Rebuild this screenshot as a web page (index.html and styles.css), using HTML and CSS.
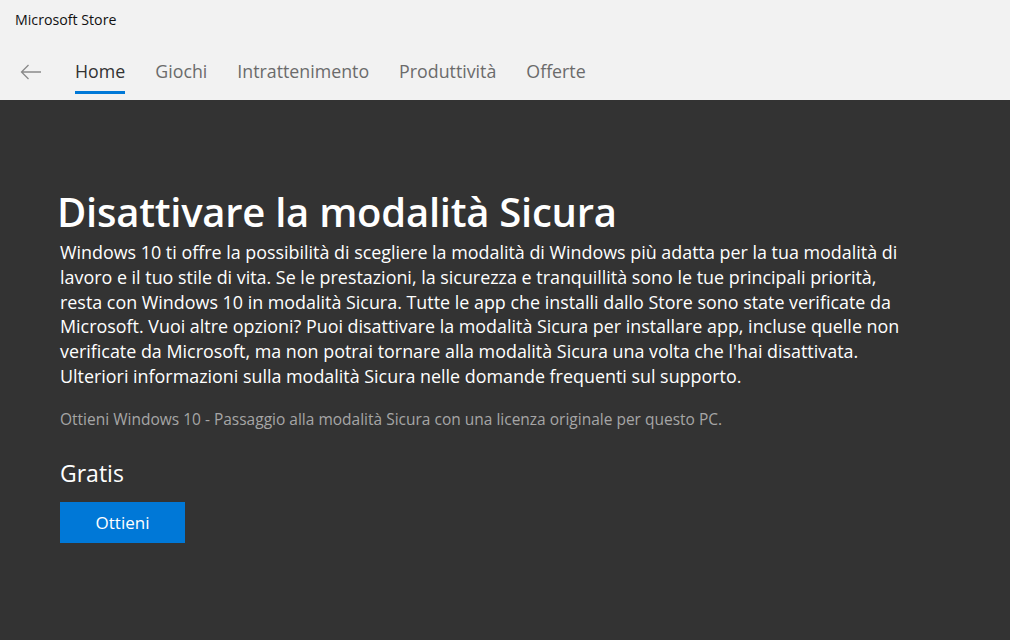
FILE: index.html
```html
<!DOCTYPE html>
<html lang="it">
<head>
<meta charset="utf-8">
<title>Microsoft Store</title>
<link rel="stylesheet" href="styles.css">
</head>
<body>
<header class="topbar">
  <div class="app-title">Microsoft Store</div>
  <nav class="nav">
    <span class="back" aria-label="Indietro">
      <svg width="22" height="16" viewBox="0 0 22 16"><path d="M21 8H1.5M8.5 1L1.5 8l7 7" fill="none" stroke="#8a8a8a" stroke-width="1.3"/></svg>
    </span>
    <a class="tab active">Home</a>
    <a class="tab">Giochi</a>
    <a class="tab">Intrattenimento</a>
    <a class="tab">Produttività</a>
    <a class="tab">Offerte</a>
  </nav>
</header>
<main class="content">
  <h1 class="title">Disattivare la modalità Sicura</h1>
  <p class="desc">Windows 10 ti offre la possibilità di scegliere la modalità di Windows più adatta per la tua modalità di<br>lavoro e il tuo stile di vita. Se le prestazioni, la sicurezza e tranquillità sono le tue principali priorità,<br>resta con Windows 10 in modalità Sicura. Tutte le app che installi dallo Store sono state verificate da<br>Microsoft. Vuoi altre opzioni? Puoi disattivare la modalità Sicura per installare app, incluse quelle non<br>verificate da Microsoft, ma non potrai tornare alla modalità Sicura una volta che l'hai disattivata.<br>Ulteriori informazioni sulla modalità Sicura nelle domande frequenti sul supporto.</p>
  <p class="note">Ottieni Windows 10 - Passaggio alla modalità Sicura con una licenza originale per questo PC.</p>
  <div class="price">Gratis</div>
  <button class="get">Ottieni</button>
</main>
</body>
</html>
```

FILE: styles.css
```css
html, body { margin: 0; padding: 0; }
body {
  width: 1010px;
  height: 640px;
  overflow: hidden;
  background: #333333;
  font-family: "Open Sans", "Noto Sans", sans-serif;
  display: flex;
  flex-direction: column;
}
.topbar {
  background: #f2f2f2;
  height: 100px;
  flex: none;
  display: flex;
  flex-direction: column;
}
.app-title {
  font-size: 14.2px;
  color: #111;
  padding: 10px 0 0 15px;
  height: 22px;
}
.nav {
  display: flex;
  align-items: flex-start;
  margin-top: 27px;
  padding-left: 20px;
}
.back { width: 22px; height: 16px; margin-top: 5px; margin-right: 33px; display: flex; }
.tab {
  font-size: 17.8px;
  color: #6b6b6b;
  margin-right: 30px;
  padding-bottom: 8px;
  border-bottom: 3px solid transparent;
  line-height: 24px;
}
.tab.active { color: #333; border-bottom-color: #0078d7; }
.content {
  flex: 1;
  padding: 87px 0 0 60px;
  color: #fff;
}
.title {
  margin: 0 0 0 -3px;
  font-size: 40px;
  font-weight: 600;
  line-height: 50px;
  letter-spacing: -0.25px;
}
.desc {
  margin: 3px 0 0;
  font-size: 17.9px;
  line-height: 24.8px;
  white-space: nowrap;
}
.note {
  margin: 20px 0 0;
  font-size: 15.5px;
  color: #a6a6a6;
  line-height: 20px;
}
.price {
  margin-top: 29px;
  font-size: 23px;
  line-height: 30px;
}
.get {
  margin-top: 14px;
  width: 125px;
  height: 41px;
  background: #0078d7;
  color: #fff;
  border: none;
  font-family: inherit;
  font-size: 17px;
  padding: 0;
}
```
